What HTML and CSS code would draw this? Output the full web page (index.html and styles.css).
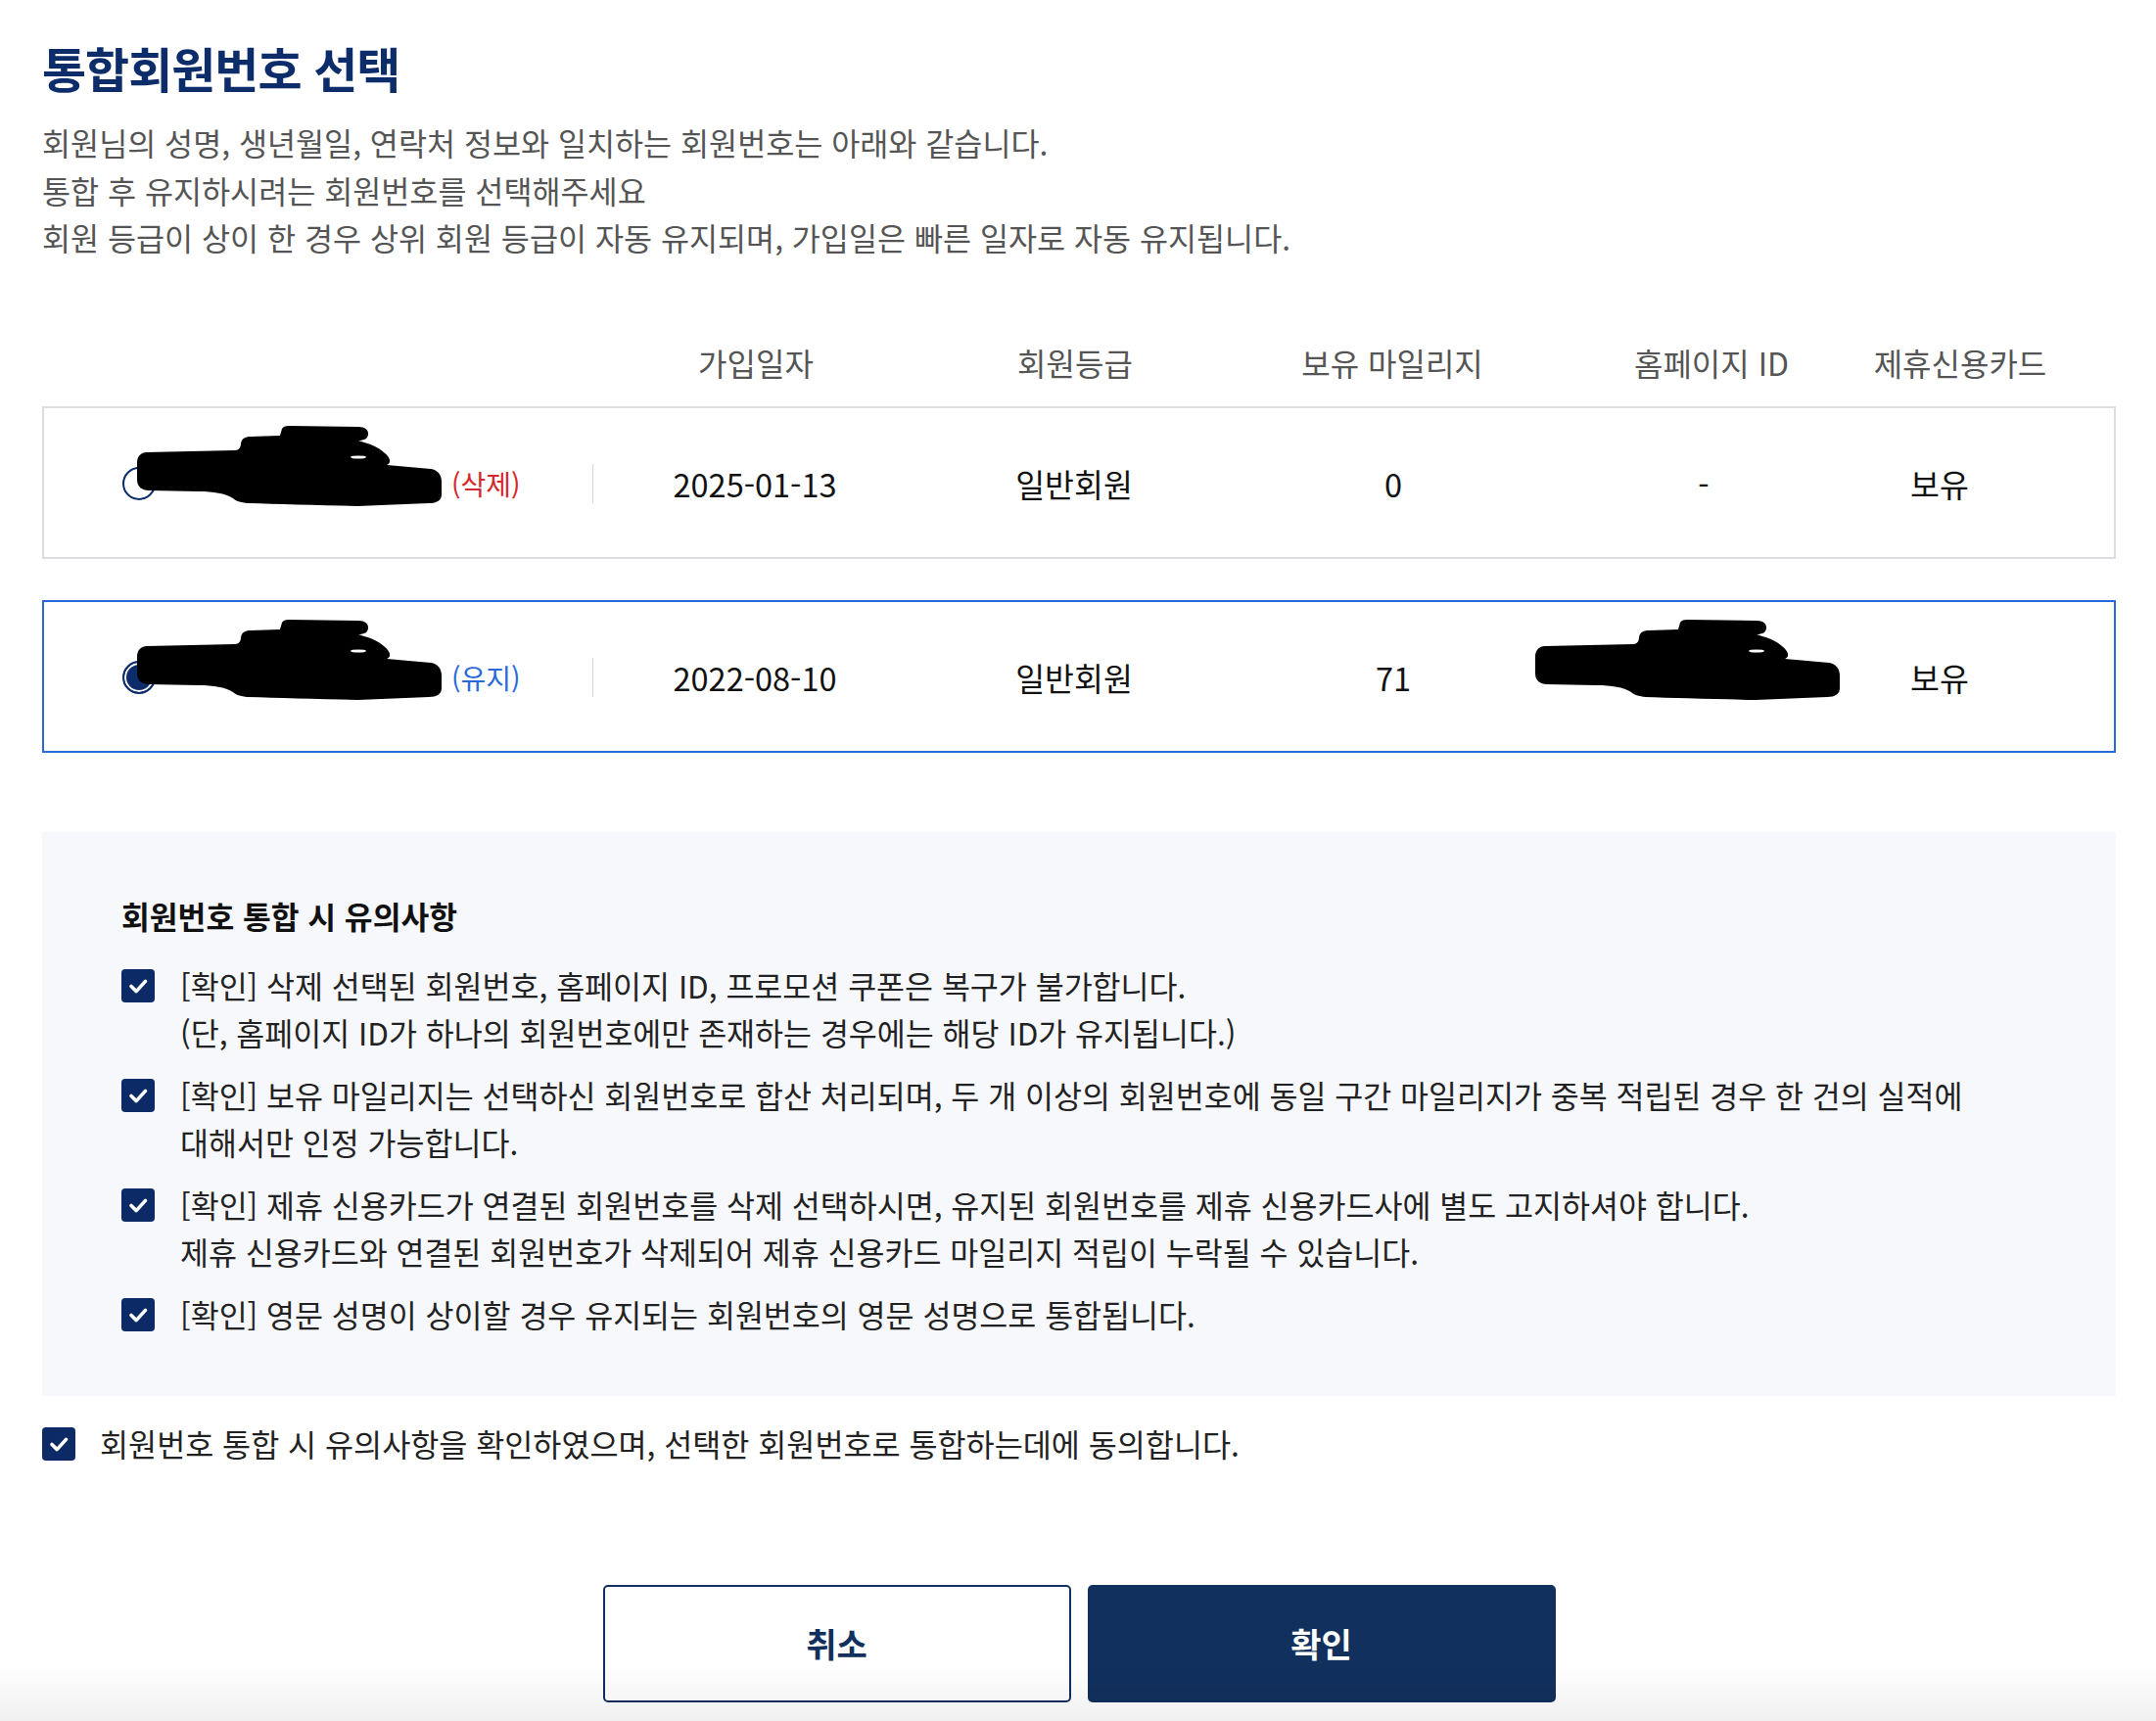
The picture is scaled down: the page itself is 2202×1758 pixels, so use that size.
FILE: index.html
```html
<!DOCTYPE html>
<html lang="ko">
<head>
<meta charset="utf-8">
<title>통합회원번호 선택</title>
<link rel="stylesheet" href="styles.css">
</head>
<body>
<div class="page">
  <h1 class="title">통합회원번호 선택</h1>
  <p class="desc">회원님의 성명, 생년월일, 연락처 정보와 일치하는 회원번호는 아래와 같습니다.<br>통합 후 유지하시려는 회원번호를 선택해주세요<br>회원 등급이 상이 한 경우 상위 회원 등급이 자동 유지되며, 가입일은 빠른 일자로 자동 유지됩니다.</p>

  <div class="thead">
    <span></span>
    <span>가입일자</span>
    <span>회원등급</span>
    <span>보유 마일리지</span>
    <span>홈페이지 ID</span>
    <span>제휴신용카드</span>
  </div>

  <div class="rows">
    <div class="row">
      <div class="cell-name">
        <span class="radio"></span>
        <span class="name">
          <svg class="blob" viewBox="0 0 311 82" width="311" height="82"><path d="M10,27 L100,25 C104,25 106,22 106,18 C107,13 110,11 116,11 L146,10 L148,3 C149,1 151,0 155,0 L226,1 C233,1 236,4 236,8 C236,13 232,15 226,15 L232,17 C244,20 252,26 256,31 C259,35 259,38 255,40 L300,44 C307,45 311,50 311,57 L311,70 C311,76 306,79 298,79 L225,82 C180,81 140,80 112,79 C104,78 100,76 98,74 C90,69 78,67 63,67 L12,66 C5,66 0,62 0,55 L0,38 C0,31 4,27 10,27 Z" fill="#000"/><ellipse cx="226" cy="32" rx="8" ry="1.6" fill="#fff"/></svg>
        </span>
        <span class="tag tag-del">(삭제)</span>
        <span class="sep"></span>
      </div>
      <div class="cell">2025-01-13</div>
      <div class="cell">일반회원</div>
      <div class="cell">0</div>
      <div class="cell">-</div>
      <div class="cell">보유</div>
    </div>

    <div class="row row-selected">
      <div class="cell-name">
        <span class="radio radio-on"></span>
        <span class="name">
          <svg class="blob" viewBox="0 0 311 82" width="311" height="82"><path d="M10,27 L100,25 C104,25 106,22 106,18 C107,13 110,11 116,11 L146,10 L148,3 C149,1 151,0 155,0 L226,1 C233,1 236,4 236,8 C236,13 232,15 226,15 L232,17 C244,20 252,26 256,31 C259,35 259,38 255,40 L300,44 C307,45 311,50 311,57 L311,70 C311,76 306,79 298,79 L225,82 C180,81 140,80 112,79 C104,78 100,76 98,74 C90,69 78,67 63,67 L12,66 C5,66 0,62 0,55 L0,38 C0,31 4,27 10,27 Z" fill="#000"/><ellipse cx="226" cy="32" rx="8" ry="1.6" fill="#fff"/></svg>
        </span>
        <span class="tag tag-keep">(유지)</span>
        <span class="sep"></span>
      </div>
      <div class="cell">2022-08-10</div>
      <div class="cell">일반회원</div>
      <div class="cell">71</div>
      <div class="cell"><span class="hp">
          <svg class="blob blob-hp" viewBox="0 0 311 82" width="311" height="82"><path d="M10,27 L100,25 C104,25 106,22 106,18 C107,13 110,11 116,11 L146,10 L148,3 C149,1 151,0 155,0 L226,1 C233,1 236,4 236,8 C236,13 232,15 226,15 L232,17 C244,20 252,26 256,31 C259,35 259,38 255,40 L300,44 C307,45 311,50 311,57 L311,70 C311,76 306,79 298,79 L225,82 C180,81 140,80 112,79 C104,78 100,76 98,74 C90,69 78,67 63,67 L12,66 C5,66 0,62 0,55 L0,38 C0,31 4,27 10,27 Z" fill="#000"/><ellipse cx="226" cy="32" rx="8" ry="1.6" fill="#fff"/></svg>
      </span></div>
      <div class="cell">보유</div>
    </div>
  </div>

  <div class="notice">
    <h2 class="notice-title">회원번호 통합 시 유의사항</h2>
    <ul class="items">
      <li class="item">
        <span class="check"><svg viewBox="0 0 34 34" width="34" height="34"><path d="M10 17.5 L15.2 22.6 L24.5 12.4" fill="none" stroke="#fff" stroke-width="3.6" stroke-linecap="round" stroke-linejoin="round"/></svg></span>
        <span class="item-text">[확인] 삭제 선택된 회원번호, 홈페이지 ID, 프로모션 쿠폰은 복구가 불가합니다.<br>(단, 홈페이지 ID가 하나의 회원번호에만 존재하는 경우에는 해당 ID가 유지됩니다.)</span>
      </li>
      <li class="item">
        <span class="check"><svg viewBox="0 0 34 34" width="34" height="34"><path d="M10 17.5 L15.2 22.6 L24.5 12.4" fill="none" stroke="#fff" stroke-width="3.6" stroke-linecap="round" stroke-linejoin="round"/></svg></span>
        <span class="item-text">[확인] 보유 마일리지는 선택하신 회원번호로 합산 처리되며, 두 개 이상의 회원번호에 동일 구간 마일리지가 중복 적립된 경우 한 건의 실적에 대해서만 인정 가능합니다.</span>
      </li>
      <li class="item">
        <span class="check"><svg viewBox="0 0 34 34" width="34" height="34"><path d="M10 17.5 L15.2 22.6 L24.5 12.4" fill="none" stroke="#fff" stroke-width="3.6" stroke-linecap="round" stroke-linejoin="round"/></svg></span>
        <span class="item-text">[확인] 제휴 신용카드가 연결된 회원번호를 삭제 선택하시면, 유지된 회원번호를 제휴 신용카드사에 별도 고지하셔야 합니다.<br>제휴 신용카드와 연결된 회원번호가 삭제되어 제휴 신용카드 마일리지 적립이 누락될 수 있습니다.</span>
      </li>
      <li class="item">
        <span class="check"><svg viewBox="0 0 34 34" width="34" height="34"><path d="M10 17.5 L15.2 22.6 L24.5 12.4" fill="none" stroke="#fff" stroke-width="3.6" stroke-linecap="round" stroke-linejoin="round"/></svg></span>
        <span class="item-text">[확인] 영문 성명이 상이할 경우 유지되는 회원번호의 영문 성명으로 통합됩니다.</span>
      </li>
    </ul>
  </div>

  <div class="agree">
    <span class="check"><svg viewBox="0 0 34 34" width="34" height="34"><path d="M10 17.5 L15.2 22.6 L24.5 12.4" fill="none" stroke="#fff" stroke-width="3.6" stroke-linecap="round" stroke-linejoin="round"/></svg></span>
    <span class="agree-text">회원번호 통합 시 유의사항을 확인하였으며, 선택한 회원번호로 통합하는데에 동의합니다.</span>
  </div>

  <div class="buttons">
    <button class="btn btn-cancel" type="button">취소</button>
    <button class="btn btn-ok" type="button">확인</button>
  </div>
</div>
<div class="fade"></div>
</body>
</html>
```

FILE: styles.css
```css
* {
  box-sizing: border-box;
}

html, body {
  margin: 0;
  padding: 0;
  background: #fff;
}

body {
  font-family: "Noto Sans CJK KR", "Noto Sans", sans-serif;
  color: #222;
  word-break: keep-all;
}

.page {
  padding: 37px 41px 20px 43px;
}

.title {
  margin: 0;
  font-size: 49px;
  line-height: 64px;
  font-weight: 700;
  color: #0c2c6a;
  letter-spacing: -1px;
}

.desc {
  margin: 20px 0 0;
  font-size: 31.6px;
  line-height: 48.5px;
  color: #555;
}

.thead {
  margin-top: 83px;
  display: grid;
  grid-template-columns: 564px 330px 322px 326px 326px 182px;
  font-size: 32px;
  line-height: 40px;
  color: #555;
  text-align: center;
}

.rows {
  margin-top: 25px;
  display: flex;
  flex-direction: column;
  gap: 42px;
}

.row {
  height: 156px;
  border: 2px solid #dcdce2;
  display: grid;
  grid-template-columns: 561px 330px 322px 330px 304px 178px;
  align-items: center;
  padding-top: 3px;
}

.row-selected {
  border-color: #2a6ad8;
}

.cell-name {
  display: flex;
  align-items: center;
  padding-left: 80px;
  height: 40px;
}

.radio {
  flex: none;
  width: 34px;
  height: 34px;
  border-radius: 50%;
  border: 2px solid #0c2c6a;
  background: #fff;
}

.radio-on {
  background: #0c2c6a;
  box-shadow: inset 0 0 0 2px #fff;
}

.name {
  flex: none;
  position: relative;
  width: 302px;
  height: 34px;
}

.blob {
  position: absolute;
  left: -19px;
  top: -42px;
  display: block;
}

.tag {
  font-size: 28px;
  line-height: 34px;
}

.tag-del {
  color: #d4282c;
}

.tag-keep {
  color: #2a6ad8;
}

.sep {
  margin-left: auto;
  width: 1px;
  height: 40px;
  background: #d6d6d6;
}

.cell {
  text-align: center;
  font-size: 32.5px;
  line-height: 40px;
  color: #111;
}

.hp {
  position: relative;
  display: block;
  height: 40px;
}

.blob-hp {
  left: -20px;
  top: -39px;
}

.notice {
  margin-top: 81px;
  background: #f7f8fc;
  padding: 62px 81px 60px 81px;
}

.notice-title {
  margin: 0;
  font-size: 31.3px;
  line-height: 48px;
  font-weight: 700;
  color: #111;
}

.items {
  list-style: none;
  margin: 22px 0 0;
  padding: 0;
  display: flex;
  flex-direction: column;
  gap: 16px;
}

.item {
  display: flex;
  align-items: flex-start;
  gap: 26px;
}

.check {
  flex: none;
  width: 34px;
  height: 34px;
  margin-top: 8px;
  border-radius: 4px;
  background: #0c2a66;
  display: block;
}

.check svg {
  display: block;
}

.item-text {
  font-size: 31.5px;
  line-height: 48px;
  color: #222;
}

.agree {
  margin-top: 24px;
  display: flex;
  align-items: flex-start;
  gap: 25px;
}

.agree-text {
  font-size: 31.6px;
  line-height: 48px;
  color: #222;
}

.buttons {
  margin-top: 121px;
  display: flex;
  justify-content: center;
  gap: 17px;
}

.btn {
  width: 478px;
  height: 120px;
  border-radius: 5px;
  font-family: "Noto Sans CJK KR", "Noto Sans", sans-serif;
  font-size: 34px;
  font-weight: 700;
  cursor: pointer;
}

.btn-cancel {
  background: #fff;
  color: #12305e;
  border: 2px solid #12305e;
}

.btn-ok {
  background: #12305e;
  color: #fff;
  border: 2px solid #12305e;
}

.fade {
  position: fixed;
  left: 0;
  right: 0;
  bottom: 0;
  height: 56px;
  background: linear-gradient(to bottom, rgba(0, 0, 0, 0), rgba(0, 0, 0, 0.06));
  pointer-events: none;
}
```
